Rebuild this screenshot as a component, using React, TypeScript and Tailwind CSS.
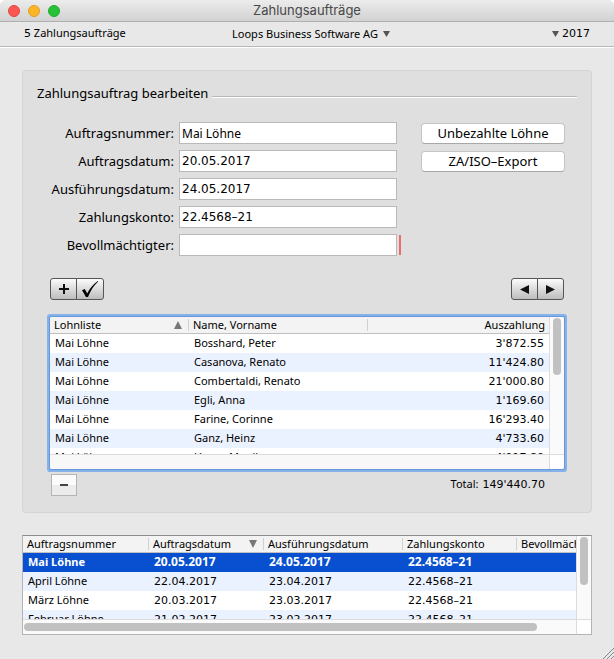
import { useState } from 'react';

const FIELDS = [
  { id: 'auftragsnummer', label: 'Auftragsnummer:', value: 'Mai Löhne' },
  { id: 'auftragsdatum', label: 'Auftragsdatum:', value: '20.05.2017', numeric: true },
  { id: 'ausfuehrungsdatum', label: 'Ausführungsdatum:', value: '24.05.2017', numeric: true },
  { id: 'zahlungskonto', label: 'Zahlungskonto:', value: '22.4568–21', numeric: true },
  { id: 'bevollmaechtigter', label: 'Bevollmächtigter:', value: '', required: true },
];
const PAYOUTS = [
  ['Mai Löhne', 'Bosshard, Peter', "3'872.55"],
  ['Mai Löhne', 'Casanova, Renato', "11'424.80"],
  ['Mai Löhne', 'Combertaldi, Renato', "21'000.80"],
  ['Mai Löhne', 'Egli, Anna', "1'169.60"],
  ['Mai Löhne', 'Farine, Corinne', "16'293.40"],
  ['Mai Löhne', 'Ganz, Heinz', "4'733.60"],
  ['Mai Löhne', 'Huser, Monika', "4'917.80"],
];
const ORDERS = [
  ['Mai Löhne', '20.05.2017', '24.05.2017', '22.4568–21', ''],
  ['April Löhne', '22.04.2017', '23.04.2017', '22.4568–21', ''],
  ['März Löhne', '20.03.2017', '23.03.2017', '22.4568–21', ''],
  ['Februar Löhne', '21.02.2017', '23.02.2017', '22.4568–21', ''],
];
const ORDER_COLUMNS = ['Auftragsnummer', 'Auftragsdatum', 'Ausführungsdatum', 'Zahlungskonto', 'Bevollmächtigter'];

const NUMERIC = "font-['DejaVu_Sans',sans-serif]";
const SEGMENT = 'flex h-[22px] items-center justify-center border border-[#555] bg-linear-to-b from-[#fcfcfc] to-[#bdbdbd] text-[#111]';
const PUSH = 'h-[21px] rounded border border-[#c4c4c4] border-b-[#a8a8a8] bg-white leading-none';

function Triangle({ dir, className }: { dir: 'up' | 'down' | 'left' | 'right'; className: string }) {
  const points = { up: '0,8 4,0 8,8', down: '0,0 8,0 4,8', left: '8,0 8,8 0,4', right: '0,0 8,4 0,8' }[dir];
  return (
    <svg viewBox="0 0 8 8" preserveAspectRatio="none" className={className} fill="currentColor" aria-hidden="true">
      <polygon points={points} />
    </svg>
  );
}

function HeaderCell({ children, first, right }: { children: React.ReactNode; first?: boolean; right?: boolean }) {
  return (
    <th className="h-[17px] overflow-hidden border-b border-[#c0c0c0] bg-[#f3f3f3] p-0 text-left font-normal">
      <div className={`flex h-3 items-center whitespace-nowrap px-1 ${first ? '' : 'border-l border-[#d0d0d0]'} ${right ? 'justify-end' : 'justify-between'}`}>{children}</div>
    </th>
  );
}

export default function App() {
  const [selected, setSelected] = useState(0);
  return (
    <div className="bg-white font-['Noto_Sans','Open_Sans',sans-serif] text-[11px] text-black">
      <div className="flex min-h-screen flex-col rounded-t-md bg-[#e8e8e8]">
        <header className="grid h-[22px] grid-cols-[1fr_auto_1fr] items-center rounded-t-md border-b border-[#b0b0b0] bg-linear-to-b from-[#ececec] to-[#d2d2d2]">
          <div className="flex gap-2 pl-2">
            <button aria-label="Schliessen" className="size-3 rounded-full border border-[#e2463f] bg-[#fc5753]" />
            <button aria-label="Minimieren" className="size-3 rounded-full border border-[#dfa023] bg-[#fdb528]" />
            <button aria-label="Maximieren" className="size-3 rounded-full border border-[#1dad2b] bg-[#27c138]" />
          </div>
          <h1 className="font-[family-name:Inter,Roboto,sans-serif] text-[13px] text-[#484848]">Zahlungsaufträge</h1>
        </header>
        <nav className="grid h-[25px] grid-cols-[1fr_auto_1fr] items-center border-b border-[#b8b8b8] px-6 shadow-[0_1px_0_#fff]">
          <span><span className={NUMERIC}>5</span> Zahlungsaufträge</span>
          <button className="flex items-center gap-[5px] pl-2">Loops Business Software AG<Triangle dir="down" className="h-1.5 w-[7px] text-[#555]" /></button>
          <button className="flex items-center gap-[3px] justify-self-end"><Triangle dir="down" className="h-1.5 w-[7px] text-[#555]" /><span className={NUMERIC}>2017</span></button>
        </nav>

        <main className="flex flex-col gap-[22px] px-[22px] pt-[23px] pb-6">
          <section className="rounded border border-[#d4d4d4] bg-[#dfdfdf] pt-3 pb-4">
            <div className="flex items-center gap-1 px-3.5">
              <h2 className="text-[13px] leading-5">Zahlungsauftrag bearbeiten</h2>
              <div className="mt-2 h-0.5 flex-1 border-t border-[#b8b8b8] bg-white" />
            </div>

            <div className="flex justify-between pl-[26px] pr-[26px] pt-[19px]">
              <div className="flex flex-col gap-1.5">
                {FIELDS.map(f => (
                  <div key={f.id} className="flex h-[22px] items-center">
                    <label htmlFor={f.id} className="w-[126px] pr-px text-right text-[13px] leading-5">{f.label}</label>
                    <input id={f.id} defaultValue={f.value} className={`ml-1 h-[22px] w-[218px] border border-[#b9b9b9] bg-white px-0.5 text-[12px] outline-none ${f.numeric ? NUMERIC : ''}`} />
                    {f.required && <span className="ml-0.5 h-5 w-0.5 bg-[#ee6b6b]" />}
                  </div>
                ))}
              </div>
              <div className="flex w-36 flex-col gap-[7px] pt-px text-[13px]">
                <button className={PUSH}>Unbezahlte Löhne</button>
                <button className={PUSH}>ZA/ISO–Export</button>
              </div>
            </div>

            <div className="flex justify-between pl-[27px] pr-[27px] pt-[22px]">
              <div className="flex -space-x-px">
                <button aria-label="Hinzufügen" className={`${SEGMENT} w-[27px] rounded-l-[3px]`}>
                  <svg viewBox="0 0 12 12" className="size-3" stroke="currentColor" strokeWidth="2" aria-hidden="true"><path d="M6 1v10M1 6h10" /></svg>
                </button>
                <button aria-label="Bestätigen" className={`${SEGMENT} w-7 rounded-r-[3px]`}>
                  <svg viewBox="0 0 18 18" className="size-[18px]" aria-hidden="true"><path d="M1 10.2L3.8 9l2.4 4.4C8.6 8.6 12 4.4 16.8 1l.4.5C12.8 5.6 9.6 10.5 7 17H5z" /></svg>
                </button>
              </div>
              <div className="flex -space-x-px">
                <button aria-label="Zurück" className={`${SEGMENT} w-[27px] rounded-l-[3px]`}><Triangle dir="left" className="h-[9px] w-[9px]" /></button>
                <button aria-label="Weiter" className={`${SEGMENT} w-[27px] rounded-r-[3px]`}><Triangle dir="right" className="h-[9px] w-[9px]" /></button>
              </div>
            </div>

            <div className="mx-[27px] mt-[17px] grid grid-cols-[1fr_15px] grid-rows-[137px_15px] rounded-[1px] bg-white ring-3 ring-[#86b2ea] outline outline-[#6797d8]">
              <div className="overflow-hidden">
                <table className="w-full table-fixed border-separate border-spacing-0">
                  <colgroup><col className="w-[138px]" /><col className="w-[179px]" /><col /></colgroup>
                  <thead>
                    <tr>
                      <HeaderCell first>Lohnliste<Triangle dir="up" className="mr-0.5 h-2 w-2 text-[#777]" /></HeaderCell>
                      <HeaderCell>Name, Vorname</HeaderCell>
                      <HeaderCell right>Auszahlung</HeaderCell>
                    </tr>
                  </thead>
                  <tbody>
                    {PAYOUTS.map(([list, name, amount]) => (
                      <tr key={name} className="h-[19px] align-top leading-[17px] even:bg-[#ebf2ff]">
                        <td className="p-0 pl-[5px]">{list}</td>
                        <td className="p-0 pl-1.5">{name}</td>
                        <td className={`p-0 pr-[5px] text-right leading-[19px] ${NUMERIC}`}>{amount}</td>
                      </tr>
                    ))}
                  </tbody>
                </table>
              </div>
              <div className="flex justify-center border-l border-[#dcdcdc] bg-[#fafafa] pt-px"><div className="h-[57px] w-2 rounded-full bg-[#c1c1c1]" /></div>
              <div className="border-t border-[#dcdcdc] bg-[#f8f8f8]" />
              <div className="border-l border-t border-[#dcdcdc]" />
            </div>

            <div className="flex items-center justify-between pl-7 pr-[46px] pt-[5px]">
              <button aria-label="Entfernen" className="flex h-[22px] w-[26px] items-center justify-center border border-[#b4b4b4] bg-linear-to-b from-[#fbfbfb] from-50% to-[#ececec] to-50%"><span className="h-0.5 w-2 bg-[#444]" /></button>
              <p className="flex items-baseline gap-1">Total: <span className={NUMERIC}>149'440.70</span></p>
            </div>
          </section>

          <section className="grid grid-cols-[1fr_15px] grid-rows-[83px_15px] border border-[#b4b4b4] border-t-[#8c8c8c] bg-white">
            <div className="overflow-hidden">
              <table className="w-full table-fixed border-separate border-spacing-0">
                <colgroup><col className="w-[125px]" /><col className="w-[115px]" /><col className="w-[139px]" /><col className="w-[114px]" /><col /></colgroup>
                <thead>
                  <tr>
                    {ORDER_COLUMNS.map((c, i) => (
                      <HeaderCell key={c} first={i === 0}>{c}{i === 1 && <Triangle dir="down" className="mr-0.5 h-2 w-2 text-[#777]" />}</HeaderCell>
                    ))}
                  </tr>
                </thead>
                <tbody>
                  {ORDERS.map((row, r) => (
                    <tr key={row[0]} onClick={() => setSelected(r)} className={`h-[19px] align-top leading-[17px] ${r === selected ? 'bg-[#0950d0] font-bold text-white' : 'even:bg-[#ebf2ff]'}`}>
                      {row.map((v, i) => (
                        <td key={i} className={`p-0 ${i === 0 ? 'pl-[5px]' : r === selected ? 'pl-1.5 text-[12px] leading-[17px]' : `pl-1.5 leading-[19px] ${NUMERIC}`}`}>{v}</td>
                      ))}
                    </tr>
                  ))}
                </tbody>
              </table>
            </div>
            <div className="flex justify-center border-l border-[#dcdcdc] bg-[#fafafa] pt-px"><div className="h-12 w-2 rounded-full bg-[#c1c1c1]" /></div>
            <div className="flex items-center border-t border-[#dcdcdc] bg-[#fafafa] pl-px"><div className="h-2 w-[93%] rounded-full bg-[#c1c1c1]" /></div>
            <div className="border-l border-t border-[#dcdcdc]" />
          </section>
        </main>
        <footer className="mt-auto flex h-0 items-end justify-end">
          <svg viewBox="0 0 12 12" className="size-3 shrink-0" stroke="#888" aria-hidden="true"><path d="M1 12L12 1M5 12l7-7M9 12l3-3" /></svg>
        </footer>
      </div>
    </div>
  );
}
